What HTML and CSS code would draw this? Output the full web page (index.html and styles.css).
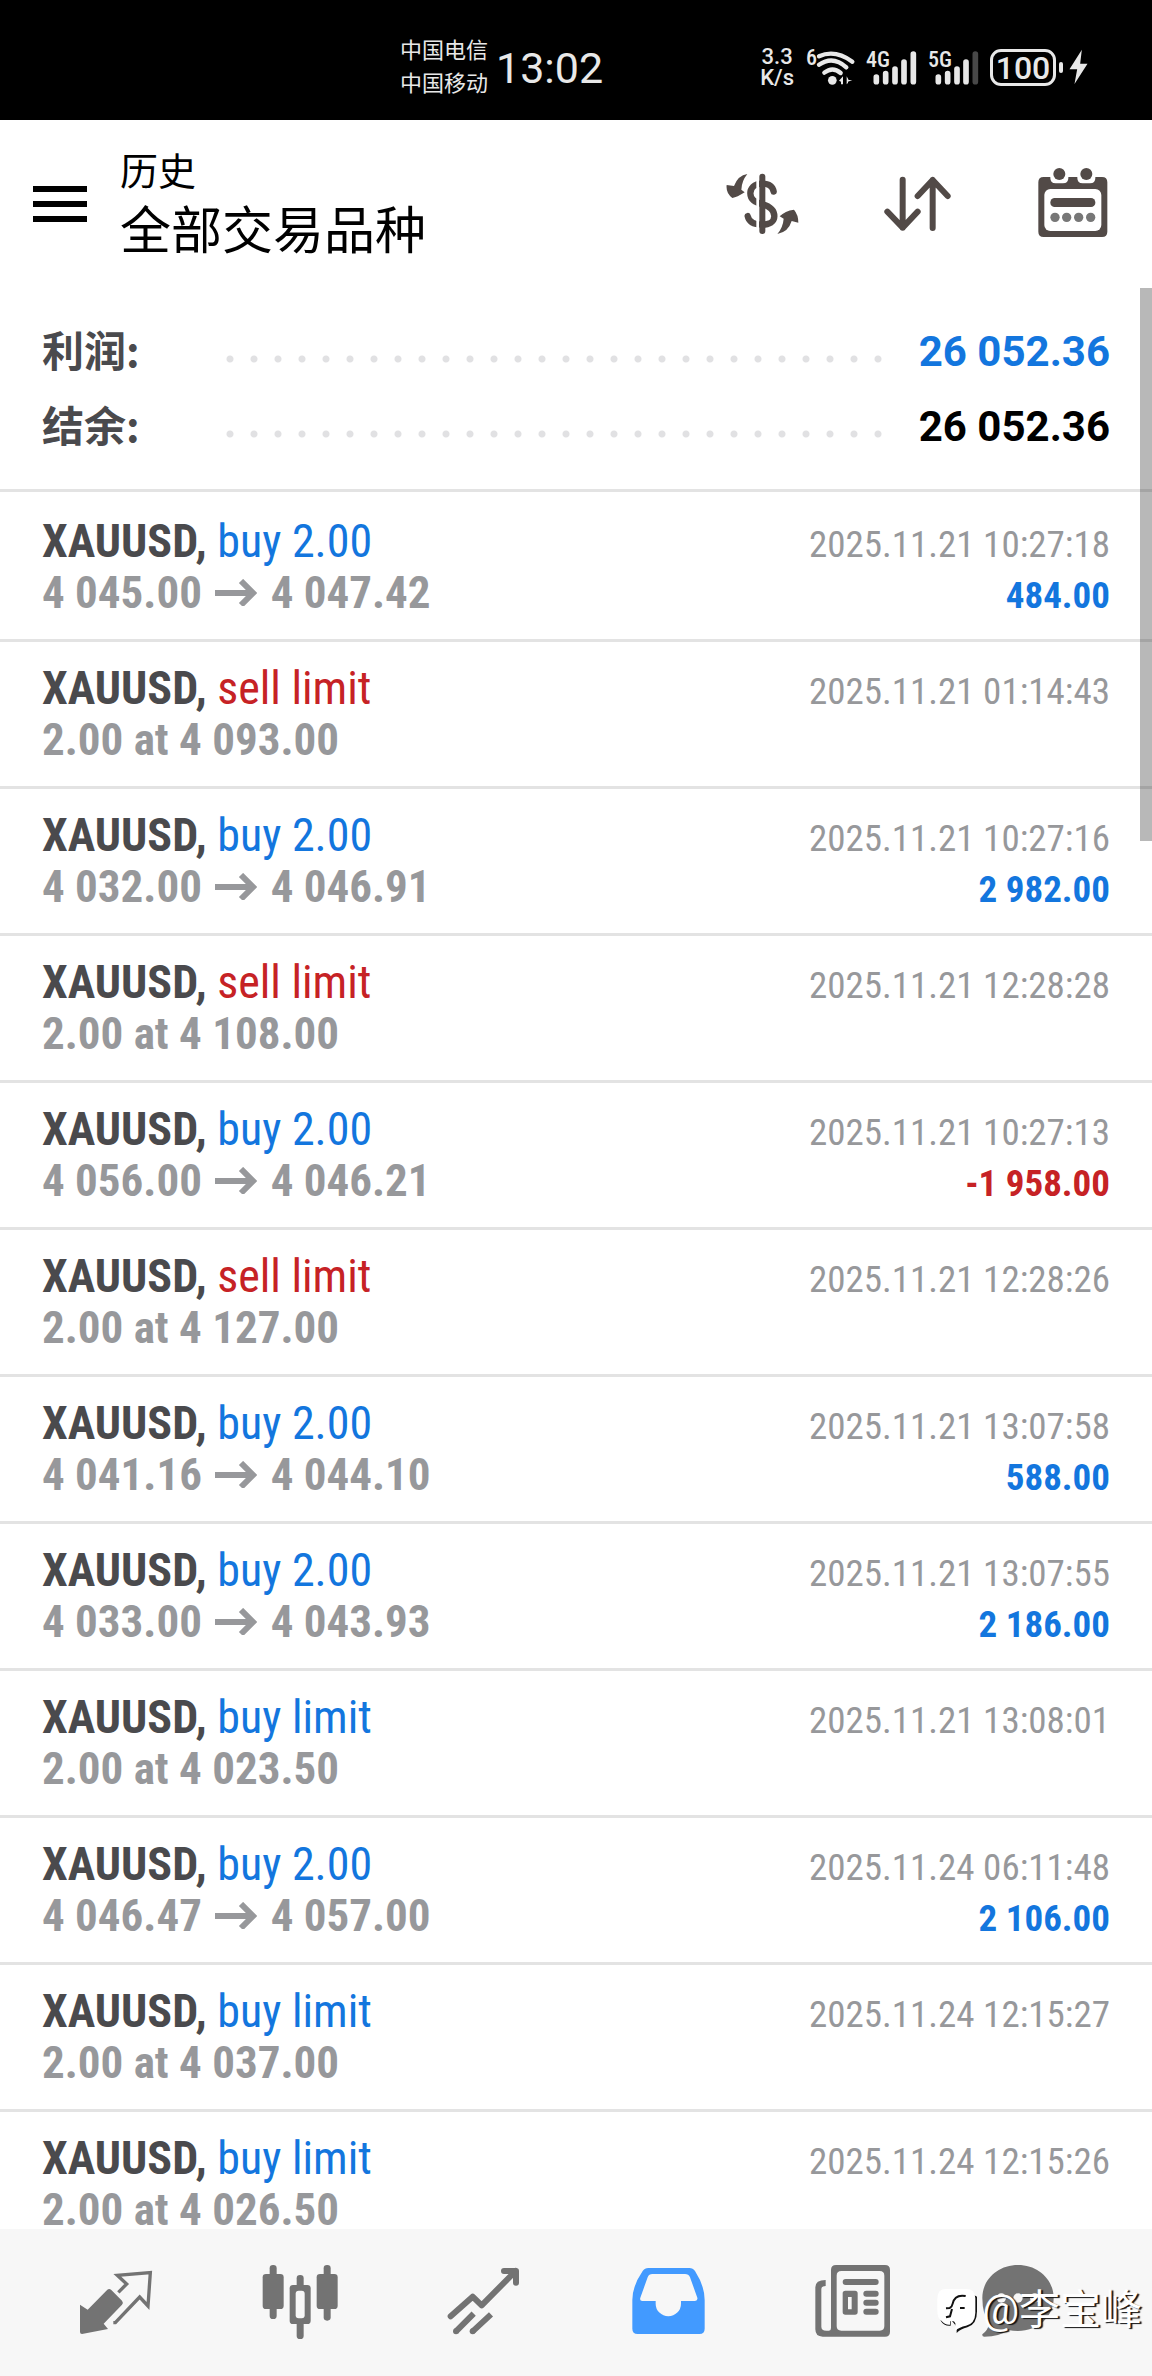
FILE: index.html
```html
<!DOCTYPE html>
<html lang="zh-CN">
<head>
<meta charset="utf-8">
<meta name="viewport" content="width=device-width, initial-scale=1">
<title>历史</title>
<link rel="stylesheet" href="styles.css">
</head>
<body>
<div class="app">
  <div class="status">
    <div class="status-left">
      <div class="carriers"><span>中国电信</span><span>中国移动</span></div>
      <time class="clock">13:02</time>
    </div>
    <div class="status-right">
      <div class="speed"><span>3.3</span><span>K/s</span></div>
      <svg class="wifi" viewBox="200 80 150 120" aria-hidden="true">
        <text x="203" y="135" class="tiny">6</text>
        <g fill="none" stroke="#e8e8e8" stroke-width="13" stroke-linecap="round">
          <path d="M242 108Q290 86 342 124"/><path d="M242 133Q284 104 324 141"/><path d="M258 157Q283 137 307 158"/>
        </g>
        <circle cx="282" cy="180" r="13" fill="#e8e8e8"/>
        <path d="M302 181L314 168V192H308V184ZM325 168V192L329 188V184L342 179L331 179Z" fill="#e8e8e8"/>
      </svg>
      <svg class="signal" viewBox="377 80 153 120" aria-hidden="true">
        <text x="377" y="141" class="net">4G</text>
        <g stroke="#e8e8e8" stroke-width="17" stroke-linecap="round"><path d="M408 170V184M436 160V184M464 146V184M491 125V184M519 101V184"/></g>
      </svg>
      <svg class="signal" viewBox="563 80 153 120" aria-hidden="true">
        <text x="563" y="141" class="net">5G</text>
        <g stroke="#e8e8e8" stroke-width="17" stroke-linecap="round"><path d="M594 170V184M622 160V184M650 146V184M677 125V184"/><path stroke="#484848" d="M705 101V184"/></g>
      </svg>
      <div class="power">
        <span class="battery">100</span><span class="battery-tip"></span>
        <svg class="bolt" viewBox="988 90 56 108" aria-hidden="true"><path fill="#e8e8e8" d="M1026 92L989 151H1012L1004 195L1043 134H1021Z"/></svg>
      </div>
    </div>
  </div>

  <header class="toolbar">
    <button class="menu" aria-label="菜单"><span></span><span></span><span></span></button>
    <div class="titles"><span class="subtitle">历史</span><h1>全部交易品种</h1></div>
    <div class="actions">
      <button aria-label="交易品种">
        <svg viewBox="74 81 225 216"><g fill="none" stroke="#524a47" stroke-linecap="round" stroke-width="19"><path d="M220 155C217 138 204 131 186 131C160 131 150 146 150 160C150 180 165 187 186 193C209 199 222 212 222 229C222 246 207 254 186 254C159 254 145 244 142 228"/></g><path d="M172 105V280" stroke="#fff" stroke-width="8"/><path d="M186 110V273" stroke="#524a47" stroke-width="18" stroke-linecap="round"/><path fill="#524a47" d="M141 102Q113 106 101 138L79 135Q76 160 96 174Q110 172 133 157L123 149Q124 123 141 102ZM231 282Q248 262 250 236L238 229Q254 212 281 209Q294 224 294 248L274 243Q264 276 231 282Z"/></svg>
      </button>
      <button aria-label="排序">
        <svg viewBox="541 81 225 216"><path fill="none" stroke="#524a47" stroke-width="18" stroke-linecap="round" stroke-linejoin="round" d="M609 119V263M563 215L609 263L654 215M699 264V120M654 168L699 120L744 168"/></svg>
      </button>
      <button aria-label="日期">
        <svg viewBox="1004 81 225 216"><path fill="#524a47" d="M1030 111H1050V114Q1050 130 1066 130H1088Q1104 130 1104 114V111H1131V114Q1131 130 1147 130H1169Q1185 130 1185 114V111H1205Q1221 111 1221 127V275Q1221 291 1205 291H1030Q1014 291 1014 275V127Q1014 111 1030 111Z"/><rect x="1032" y="147" width="171" height="126" rx="18" fill="#fff"/><g fill="#524a47"><circle cx="1077" cy="102" r="18"/><circle cx="1158" cy="102" r="18"/><rect x="1050" y="174" width="135" height="27" rx="13"/></g><g fill="#777"><circle cx="1064" cy="232" r="14"/><circle cx="1099" cy="232" r="14"/><circle cx="1135" cy="232" r="14"/><circle cx="1171" cy="232" r="14"/></g></svg>
      </button>
    </div>
  </header>

  <main class="content">
    <dl class="summary">
      <div class="sum-row"><dt>利润:</dt><dd class="leader" aria-hidden="true"></dd><dd class="up">26 052.36</dd></div>
      <div class="sum-row"><dt>结余:</dt><dd class="leader" aria-hidden="true"></dd><dd>26 052.36</dd></div>
    </dl>
    <ul class="deals">
      <li><div class="deal"><p><b>XAUUSD,</b> <span class="up">buy 2.00</span></p><p class="price">4 045.00 <svg class="arrow" viewBox="0 0 42 27"><path d="M0 14H38M26 2L38 14L26 26"/></svg> 4 047.42</p></div><div class="result"><time>2025.11.21 10:27:18</time><span class="up">484.00</span></div></li>
      <li><div class="deal"><p><b>XAUUSD,</b> <span class="down">sell limit</span></p><p class="price">2.00 at 4 093.00</p></div><div class="result"><time>2025.11.21 01:14:43</time></div></li>
      <li><div class="deal"><p><b>XAUUSD,</b> <span class="up">buy 2.00</span></p><p class="price">4 032.00 <svg class="arrow" viewBox="0 0 42 27"><path d="M0 14H38M26 2L38 14L26 26"/></svg> 4 046.91</p></div><div class="result"><time>2025.11.21 10:27:16</time><span class="up">2 982.00</span></div></li>
      <li><div class="deal"><p><b>XAUUSD,</b> <span class="down">sell limit</span></p><p class="price">2.00 at 4 108.00</p></div><div class="result"><time>2025.11.21 12:28:28</time></div></li>
      <li><div class="deal"><p><b>XAUUSD,</b> <span class="up">buy 2.00</span></p><p class="price">4 056.00 <svg class="arrow" viewBox="0 0 42 27"><path d="M0 14H38M26 2L38 14L26 26"/></svg> 4 046.21</p></div><div class="result"><time>2025.11.21 10:27:13</time><span class="down">-1 958.00</span></div></li>
      <li><div class="deal"><p><b>XAUUSD,</b> <span class="down">sell limit</span></p><p class="price">2.00 at 4 127.00</p></div><div class="result"><time>2025.11.21 12:28:26</time></div></li>
      <li><div class="deal"><p><b>XAUUSD,</b> <span class="up">buy 2.00</span></p><p class="price">4 041.16 <svg class="arrow" viewBox="0 0 42 27"><path d="M0 14H38M26 2L38 14L26 26"/></svg> 4 044.10</p></div><div class="result"><time>2025.11.21 13:07:58</time><span class="up">588.00</span></div></li>
      <li><div class="deal"><p><b>XAUUSD,</b> <span class="up">buy 2.00</span></p><p class="price">4 033.00 <svg class="arrow" viewBox="0 0 42 27"><path d="M0 14H38M26 2L38 14L26 26"/></svg> 4 043.93</p></div><div class="result"><time>2025.11.21 13:07:55</time><span class="up">2 186.00</span></div></li>
      <li><div class="deal"><p><b>XAUUSD,</b> <span class="up">buy limit</span></p><p class="price">2.00 at 4 023.50</p></div><div class="result"><time>2025.11.21 13:08:01</time></div></li>
      <li><div class="deal"><p><b>XAUUSD,</b> <span class="up">buy 2.00</span></p><p class="price">4 046.47 <svg class="arrow" viewBox="0 0 42 27"><path d="M0 14H38M26 2L38 14L26 26"/></svg> 4 057.00</p></div><div class="result"><time>2025.11.24 06:11:48</time><span class="up">2 106.00</span></div></li>
      <li><div class="deal"><p><b>XAUUSD,</b> <span class="up">buy limit</span></p><p class="price">2.00 at 4 037.00</p></div><div class="result"><time>2025.11.24 12:15:27</time></div></li>
      <li><div class="deal"><p><b>XAUUSD,</b> <span class="up">buy limit</span></p><p class="price">2.00 at 4 026.50</p></div><div class="result"><time>2025.11.24 12:15:26</time></div></li>
    </ul>
    <div class="scroll-thumb"></div>
  </main>

  <nav class="tabs">
    <a href="#quotes" aria-label="行情"><svg viewBox="228 543 240 240"><g fill="#737373"><path d="M240 674L263 689L322 629Q328 624 334 630L366 662Q371 668 366 674L311 731L324 747L246 762Q240 762 240 756Z"/></g><path fill="none" stroke="#737373" stroke-width="10" d="M340 728H346L419 651L444 678L451 578L352 586L380 612L355 637"/></svg></a>
    <a href="#chart" aria-label="图表"><svg viewBox="778 543 240 240"><g fill="#737373"><rect x="807" y="555" width="21" height="162" rx="10"/><rect x="786" y="582" width="63" height="105" rx="10"/><rect x="888" y="585" width="21" height="192" rx="10"/><rect x="867" y="615" width="63" height="117" rx="10"/><rect x="969" y="555" width="21" height="167" rx="10"/><rect x="948" y="582" width="63" height="105" rx="10"/></g><rect x="885" y="632" width="27" height="83" rx="9" fill="#f7f7f7"/></svg></a>
    <a href="#trade" aria-label="交易"><svg viewBox="132 123 240 240"><path fill="none" stroke="#737373" stroke-width="18" stroke-linecap="round" stroke-linejoin="round" d="M152 289L218 230L245 256L347 153M312 153H348V188"/><path fill="none" stroke="#737373" stroke-width="18" d="M168 334L221 281M218 334L273 283"/><g fill="#737373"><circle cx="168" cy="334" r="9"/><circle cx="218" cy="334" r="9"/></g></svg></a>
    <a href="#history" aria-label="历史" aria-current="page"><svg viewBox="684 123 240 240"><path fill="#429aff" d="M745 144H868Q879 144 885 153Q914 198 914 240V326Q914 342 898 342H713Q697 342 697 326V240Q697 198 728 153Q734 144 745 144Z"/><path fill="#f7f7f7" d="M757 162H855Q866 162 870 172L892 233Q894 242 885 243H843V251A37 37 0 0 1 767 251V243H727Q718 242 721 233L743 172Q747 162 757 162Z"/></svg></a>
    <a href="#news" aria-label="新闻"><svg viewBox="99 123 240 240"><path fill="#737373" fill-rule="evenodd" d="M171 135H318Q333 135 333 150V335Q333 350 318 350H131Q109 350 109 328V202Q109 180 140 180V198Q127 198 127 208V320Q127 332 142 332H150Q156 332 156 324V150Q156 135 171 135ZM187 153Q173 153 173 167V318Q173 332 187 332H302Q316 332 316 318V167Q316 153 302 153Z"/><g fill="#737373"><rect x="191" y="177" width="108" height="18" rx="9"/><path fill-rule="evenodd" d="M199 212H228Q236 212 236 220V276Q236 284 228 284H199Q191 284 191 276V220Q191 212 199 212ZM207 231V268H218V231Z"/><rect x="253" y="212" width="46" height="18" rx="9"/><rect x="253" y="239" width="46" height="18" rx="9"/><rect x="253" y="266" width="46" height="18" rx="9"/></g></svg></a>
    <a href="#messages" aria-label="消息"><svg viewBox="594 123 240 240"><path fill="#737373" d="M714 135C774 135 821 178 821 234C821 291 773 333 714 333C704 333 694 332 685 330Q659 350 613 350Q606 350 607 343Q623 331 628 311Q607 282 607 234C607 178 654 135 714 135Z"/><g fill="#f7f7f7"><circle cx="664" cy="234" r="14"/><circle cx="714" cy="234" r="14"/><circle cx="764" cy="234" r="14"/></g></svg></a>
  </nav>
  <div class="watermark">
    <svg viewBox="15 30 129 144" aria-hidden="true"><path fill="#111" d="M32 134Q42 151 62 149V130L80 152V171Q92 159 112 154Q141 146 141 106V62L120 50L40 100Z"/><path fill="#fff" d="M48 39H108Q136 39 136 67V110Q135 143 108 149Q88 153 76 164V142Q72 132 60 136V146Q46 148 34 134Q22 126 22 104V67Q22 39 48 39Z"/><path d="M107 60Q74 54 68 83Q66 93 59 96L48 97M66 99L60 121L48 124M90 96H104" fill="none" stroke="#111" stroke-width="6"/></svg>
    <span>@李宝峰</span>
  </div>
</div>
</body>
</html>
```
FILE: styles.css
```css
* { box-sizing: border-box; margin: 0; padding: 0; }

body {
  font-family: Roboto, "Noto Sans CJK SC", sans-serif;
  background: #fff;
  color: #000;
}

.app { position: relative; display: flex; flex-direction: column; height: 100vh; overflow: hidden; }
button { border: 0; background: none; }
svg { display: block; }

/* status bar */
.status {
  display: flex;
  justify-content: space-between;
  align-items: center;
  flex: none;
  height: 120px;
  padding: 14px 64px 0 400px;
  background: #000;
  color: #e8e8e8;
}
.status-left, .status-right, .power { display: flex; align-items: center; }
.status-left { gap: 8px; }
.status-right { gap: 11px; }
.carriers, .speed { display: flex; flex-direction: column; }
.carriers { font-size: 22px; line-height: 33px; }
.clock { padding-top: 2px; font-size: 43px; line-height: 56px; }
.speed { font-size: 22px; font-weight: 500; line-height: 21px; text-align: center; }
.wifi, .signal { height: 40px; overflow: visible; }
.wifi { width: 50px; }
.signal { width: 51px; }
.tiny, .net { font-family: "Roboto Condensed", Roboto, sans-serif; font-weight: 500; font-size: 66px; fill: #e8e8e8; }
.battery {
  width: 66px;
  height: 37px;
  border: 3px solid #e8e8e8;
  border-radius: 11px;
  font-size: 32px;
  font-weight: 500;
  line-height: 32px;
  text-align: center;
}
.battery-tip { width: 4px; height: 11px; margin: 0 6px 0 3px; border-radius: 2px; background: #e8e8e8; }
.bolt { width: 19px; height: 36px; }

/* toolbar */
.toolbar { display: flex; align-items: center; flex: none; height: 168px; padding: 0 42px 0 33px; }
.menu { display: flex; flex-direction: column; gap: 9px; width: 54px; margin-right: 33px; }
.menu span { height: 6px; background: #000; }
.titles { flex: 1; padding-bottom: 4px; line-height: 60px; }
.subtitle { display: block; font-size: 38px; }
.titles h1 { font-size: 51px; font-weight: 400; }
.actions { display: flex; gap: 80px; padding-bottom: 2px; }
.actions svg { width: 75px; height: 72px; }

/* account summary */
.content { position: relative; flex: 1; min-height: 0; overflow: hidden; }
.summary { margin-bottom: 3px; padding: 26px 42px 25px; border-bottom: 3px solid #e3e3e3; font-size: 42px; font-weight: 700; line-height: 75px; }
.sum-row { display: flex; align-items: center; height: 75px; }
.sum-row dt { width: 176px; padding-bottom: 6px; color: #4a4a4d; font-family: "Noto Sans CJK SC", sans-serif; }
.leader {
  flex: 1;
  height: 8px;
  margin: 14px 30px 0 0;
  background: radial-gradient(circle, #e1e1e3 0 3px, transparent 4px) 0 0 / 24px 8px repeat-x;
}
.up { color: #1376de; }
.down { color: #c62225; }

/* deal list */
.deals { list-style: none; font-family: "Roboto Condensed", "Liberation Sans Narrow", sans-serif; }
.deals li { display: flex; justify-content: space-between; height: 147px; padding: 21px 42px 0; border-bottom: 3px solid #e3e3e3; }
.deal { font-size: 46px; line-height: 51px; }
.deal b { color: #4a4a4d; }
.price { color: #97989b; font-size: 45px; font-weight: 700; }
.arrow { display: inline-block; width: 42px; height: 27px; margin: 0 3px; fill: none; stroke: #97989b; stroke-width: 6px; vertical-align: 2px; }
.result { display: flex; flex-direction: column; padding-top: 3px; font-size: 37px; line-height: 51px; text-align: right; }
.result time { color: #97989b; }
.result span { font-weight: 700; }
.scroll-thumb { position: absolute; top: 0; right: 0; width: 12px; height: 553px; background: rgba(0, 0, 0, .28); }

/* bottom tabs */
.tabs { display: grid; grid-template-columns: repeat(5, 184fr) 148fr; flex: none; height: 147px; padding: 0 60px 4px 24px; background: #f7f7f7; }
.tabs a { display: flex; align-items: center; justify-content: center; }
.tabs svg { width: 80px; height: 80px; }

.watermark { position: absolute; right: 10px; bottom: 36px; display: flex; align-items: center; gap: 4px; color: #fff; font-size: 41px; line-height: 60px; text-shadow: 2px 1px 1px #111; }
.watermark svg { width: 43px; height: 48px; }
```
